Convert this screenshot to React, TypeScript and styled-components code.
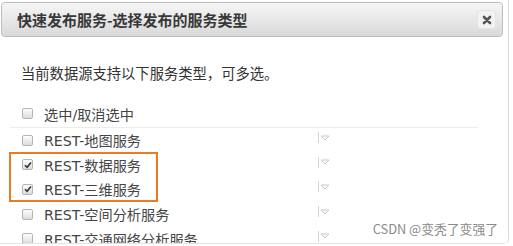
import React from "react";
import styled, { createGlobalStyle } from "styled-components";

const Global = createGlobalStyle`
  html, body { margin: 0; padding: 0; background: #fff; overflow: hidden; }
  body { font-family: "DejaVu Sans", "Noto Sans CJK SC", sans-serif; color: #333; }
`;

const Dialog = styled.div`
  position: relative;
  width: 509px;
  height: 244px;
  border-right: 1px solid #dcdcdc;
  border-bottom: 1px solid #e4e4e4;
  border-bottom-right-radius: 5px;
  box-sizing: border-box;
  overflow: hidden;
`;

const Header = styled.div`
  margin: 2px 5px 0 1px;
  height: 35px;
  box-sizing: border-box;
  border: 1px solid #bdbdbd;
  border-radius: 4px;
  background: linear-gradient(#f6f6f6, #d9d9d9);
  display: flex;
  align-items: center;
  justify-content: space-between;
  padding: 0 7px 0 15px;
`;

const Title = styled.div`
  font-family: "Noto Sans CJK SC", sans-serif;
  font-weight: bold;
  font-size: 15px;
  color: #383838;
`;

const Close = styled.div`
  width: 17px;
  height: 17px;
  border-radius: 3px;
  background: #f3f3f3;
  box-shadow: 0 0 0 1px #e4e4e4;
  display: flex;
  align-items: center;
  justify-content: center;
`;

const Desc = styled.div`
  margin: 26px 0 0 21px;
  font-family: "Noto Sans CJK SC", sans-serif;
  font-size: 14.3px;
  line-height: 20px;
  color: #333;
`;

const List = styled.div`
  margin: 17px 0 0 10px;
  width: 468px;
`;

const Row = styled.div<{ $head?: boolean }>`
  display: flex;
  align-items: center;
  height: ${(p) => (p.$head ? "27px" : "24.6px")};
  border-bottom: ${(p) => (p.$head ? "1px solid #ececec" : "none")};
  padding-left: 12px;
`;

const Box = styled.span<{ $on?: boolean }>`
  width: 11px;
  height: 11px;
  box-sizing: border-box;
  border: 1px solid #b4b4b4;
  border-radius: 2px;
  background: linear-gradient(#fdfdfd, #dcdcdc);
  display: flex;
  align-items: center;
  justify-content: center;
  flex: none;
`;

const Label = styled.span`
  margin-left: 11px;
  width: 274px;
  font-family: "DejaVu Sans", "Noto Sans CJK SC", sans-serif;
  font-size: 14.2px;
  color: #454545;
  white-space: nowrap;
`;

const Picker = styled.span`
  display: flex;
  align-items: center;
  gap: 3px;
  height: 11px;
  border-left: 1px solid #d4d4d4;
  padding-left: 1px;
  margin-bottom: 5px;
`;

const Highlight = styled.div`
  position: absolute;
  left: 9px;
  top: 152px;
  width: 149px;
  height: 50px;
  box-sizing: border-box;
  border: 2px solid #ec7a22;
`;

const Watermark = styled.div`
  position: absolute;
  right: 10px;
  bottom: 5px;
  font-family: "Noto Sans CJK SC", sans-serif;
  font-size: 12.8px;
  line-height: 18px;
  color: #8a8a8a;
`;

const Check = () => (
  <svg width="8" height="8" viewBox="0 0 8 8">
    <path d="M1 4.2 L3.1 6.3 L7 1.5" fill="none" stroke="#333" strokeWidth="1.6" />
  </svg>
);

const Tri = () => (
  <svg width="10" height="6" viewBox="0 0 10 6">
    <path d="M1 1 H9 L5 5 Z" fill="#fafafa" stroke="#cacaca" strokeWidth="1" strokeLinejoin="round" />
  </svg>
);

const items = [
  { label: "REST-地图服务", on: false },
  { label: "REST-数据服务", on: true },
  { label: "REST-三维服务", on: true },
  { label: "REST-空间分析服务", on: false },
  { label: "REST-交通网络分析服务", on: false },
];

export default function App() {
  return (
    <>
      <Global />
      <Dialog>
        <Header>
          <Title>快速发布服务-选择发布的服务类型</Title>
          <Close>
            <svg width="10" height="10" viewBox="0 0 10 10">
              <path d="M2 2 L8 8 M8 2 L2 8" stroke="#555" strokeWidth="2.6" strokeLinecap="round" />
            </svg>
          </Close>
        </Header>
        <Desc>当前数据源支持以下服务类型，可多选。</Desc>
        <List>
          <Row $head>
            <Box />
            <Label>选中/取消选中</Label>
          </Row>
          {items.map((it) => (
            <Row key={it.label}>
              <Box $on={it.on}>{it.on && <Check />}</Box>
              <Label>{it.label}</Label>
              <Picker>
                <Tri />
              </Picker>
            </Row>
          ))}
        </List>
        <Highlight />
        <Watermark>CSDN @变秃了变强了</Watermark>
      </Dialog>
    </>
  );
}
